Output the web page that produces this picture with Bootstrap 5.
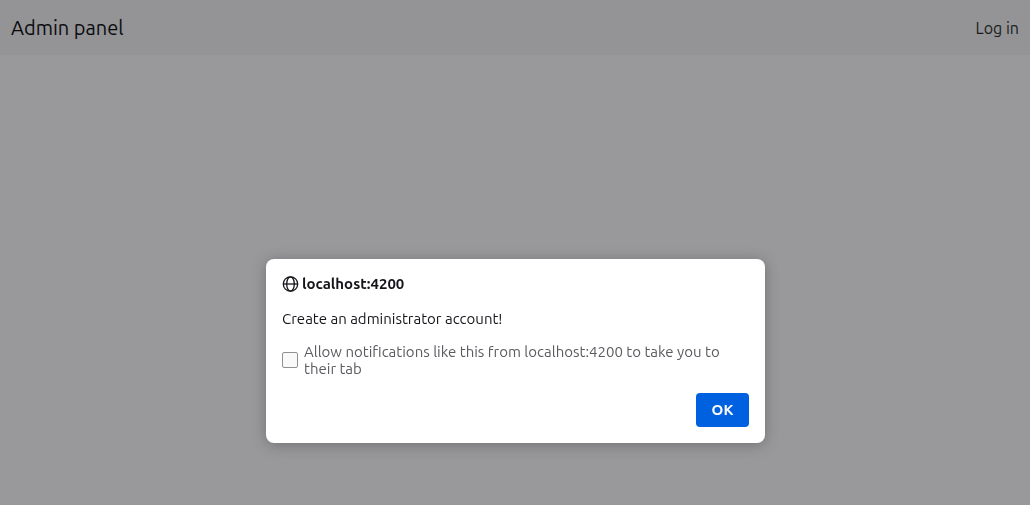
<!DOCTYPE html>
<html lang="en">
<head>
<meta charset="utf-8">
<meta name="viewport" content="width=device-width, initial-scale=1">
<title>Admin panel</title>
<link href="https://cdn.jsdelivr.net/npm/bootstrap@5.3.0/dist/css/bootstrap.min.css" rel="stylesheet">
<style>
  body { background: #99999b; font-family: Ubuntu, "Noto Sans", sans-serif; }
  .topbar { background: #949496; min-height: 55px; padding: 0 11px; }
  .topbar a { color: #1a1c20; font-size: 16px; }
  .topbar .navbar-brand { color: #0a0b0e; font-size: 20px; }
  .prompt-layer { padding: 0 15px 62px 16px; }
  .prompt { width: 499px; border-radius: 8px; padding: 16px; color: #15141a; font-size: 15px; line-height: 17px; box-shadow: 0 2px 14px rgba(58, 57, 68, .4); }
  .prompt-title { font-size: 15px; line-height: 18px; gap: 3px; margin-bottom: 17px; }
  .prompt-message { margin-bottom: 16px; }
  .prompt-option { color: #5b5b60; gap: 6px; margin-bottom: 16px; }
  .prompt-option .form-check-input { width: 16px; height: 16px; border: 1px solid #8f8f94; border-radius: 2px; background-color: #f9f9fa; }
  .prompt .btn { background: #0061e0; color: #fbfbfe; border: 0; border-radius: 4px; width: 53px; height: 34px; padding: 0; font-size: 15px; }
</style>
</head>
<body>
<nav class="navbar topbar justify-content-between">
  <a class="navbar-brand m-0 p-0" href="#">Admin panel</a>
  <a class="text-decoration-none" href="#">Log in</a>
</nav>
<div class="prompt-layer position-fixed top-0 start-0 w-100 h-100 d-flex align-items-end justify-content-center">
  <div class="prompt bg-white" role="dialog" aria-modal="true" aria-labelledby="promptTitle">
    <h1 class="prompt-title d-flex align-items-center fw-bold" id="promptTitle">
      <svg width="17" height="16" viewBox="0 0 17 16" fill="none" stroke="currentColor" stroke-width="1.3" aria-hidden="true">
        <circle cx="8.5" cy="8" r="7.2"/>
        <ellipse cx="8.5" cy="8" rx="3.8" ry="7.2"/>
        <path d="M1.3 8h14.4"/>
      </svg>
      <span>localhost:4200</span>
    </h1>
    <p class="prompt-message">Create an administrator account!</p>
    <div class="prompt-option d-flex align-items-center">
      <input class="form-check-input flex-shrink-0 m-0" type="checkbox" id="allowTab">
      <label for="allowTab">Allow notifications like this from localhost:4200 to take you to their tab</label>
    </div>
    <div class="d-flex justify-content-end">
      <button type="button" class="btn fw-bold">OK</button>
    </div>
  </div>
</div>
<script src="https://cdn.jsdelivr.net/npm/bootstrap@5.3.0/dist/js/bootstrap.bundle.min.js"></script>
</body>
</html>
